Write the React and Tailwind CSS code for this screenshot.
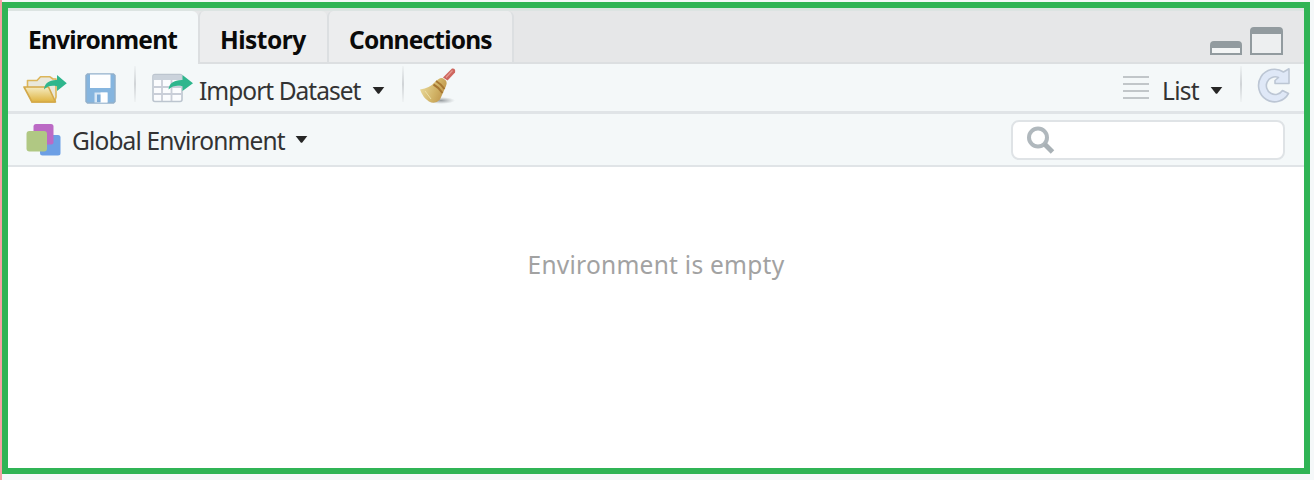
import React from "react";

function Caret({ className = "" }) {
  return (
    <svg className={`shrink-0 ${className}`} width="13" height="9" viewBox="0 0 13 9">
      <path d="M0.700 1 H12.300 L7.500 7.300 Q6.500 8.300 5.500 7.300 Z" fill="#262626" />
    </svg>
  );
}

function Arrow() {
  return (
    <path
      d="M0 14.500 C0.500 8 6 4.600 14 4.900 L14 0 L24.500 8.300 L14 16 L14 11.200 C8 10.200 4 10.800 0 14.500 Z"
      fill="#2eb68d"
    />
  );
}

function OpenFolder() {
  return (
    <svg className="shrink-0" width="46" height="30" viewBox="0 0 46 30">
      <defs>
        <linearGradient id="folder" x1="0" y1="0" x2="0" y2="1">
          <stop offset="0" stopColor="#f5ecc2" />
          <stop offset="1" stopColor="#dfb33f" />
        </linearGradient>
      </defs>
      <path d="M4.500 14 V6.500 H14 L17.500 2.800 H27 L30 5 H33 V23 L31.500 28 H9 Z" fill="#e9e8dc" stroke="#dcb65a" strokeWidth="1.600" strokeLinejoin="round" />
      <path d="M1 13 H25.500 L32.500 28 H9 Z" fill="url(#folder)" stroke="#d3a94a" strokeWidth="1.600" strokeLinejoin="round" />
      <g transform="translate(21 1) scale(0.93 1)"><Arrow /></g>
    </svg>
  );
}

function Floppy() {
  return (
    <svg className="shrink-0" width="31" height="31" viewBox="0 0 31 31">
      <path d="M2.500 1 H28.500 L30 2.500 V28.500 L28.500 30 H2.500 L1 28.500 V2.500 Z" fill="#85b5df" stroke="#93b0ca" strokeWidth="1.500" />
      <rect x="5" y="1.500" width="20.500" height="13.500" fill="#fdfeff" />
      <path d="M9.500 19.500 H22.500 V29.500 H9.500 Z" fill="#d7e7f5" />
      <path d="M15.500 19.500 H22.500 V29.500 H15.500 Z" fill="#fff" />
      <rect x="12" y="21.500" width="3.500" height="7.500" fill="#78a9d7" />
    </svg>
  );
}

function TableImport() {
  return (
    <svg className="shrink-0" width="43" height="30" viewBox="0 0 43 30">
      <rect x="1" y="1.500" width="29" height="27" rx="2" fill="#fbfcfe" stroke="#bcc5cf" strokeWidth="1.600" />
      <path d="M1.500 2 H29.500 V7 H1.500 Z" fill="#cbd3dc" />
      <path d="M1 14 H30 M1 21 H30 M10 7 V28 M19.500 7 V28" stroke="#c9ced8" strokeWidth="1.800" />
      <g transform="translate(16.500 2)"><Arrow /></g>
    </svg>
  );
}

function Broom() {
  return (
    <svg className="shrink-0" width="38" height="38" viewBox="0 0 38 38">
      <defs>
        <linearGradient id="straw" x1="0" y1="0.300" x2="1" y2="0.700">
          <stop offset="0" stopColor="#eadb9e" />
          <stop offset="0.600" stopColor="#d0b164" />
          <stop offset="1" stopColor="#bc9148" />
        </linearGradient>
        <radialGradient id="shade">
          <stop offset="0" stopColor="#8b9195" stopOpacity="0.900" />
          <stop offset="1" stopColor="#a1a6a9" stopOpacity="0" />
        </radialGradient>
      </defs>
      <ellipse cx="22" cy="33.500" rx="14" ry="3.500" fill="url(#shade)" />
      <path d="M33 1.500 Q37 1 36 5.500 L28.500 13.500 L24 10.500 Z" fill="#ce665f" />
      <path d="M33.500 3.500 L27 10.500" stroke="#e39a91" strokeWidth="1.200" />
      <path d="M19 12.500 Q23 10 25 12 Q29 14 27 19 L21 32.500 Q16 38 10 34.500 Q4 31 1 22.500 Q11 21 16 15 Z" fill="url(#straw)" />
      <path d="M17 14 Q22 17 25.500 22 M14.500 17.500 Q20 20.500 23.500 26" fill="none" stroke="#a67632" strokeWidth="2" />
      <path d="M6 24 L12 32" stroke="#eee0a5" strokeWidth="1" />
    </svg>
  );
}

function Layers() {
  return (
    <svg className="shrink-0" width="36" height="34" viewBox="0 0 36 34">
      <rect x="14" y="12" width="20.500" height="20.500" rx="2.500" fill="#6c9fe5" />
      <rect x="7.500" y="1" width="20" height="20.500" rx="2.500" fill="#bb6ac5" />
      <rect x="0.500" y="8" width="20.500" height="20.500" rx="3" fill="#b0c883" />
    </svg>
  );
}

function Refresh() {
  return (
    <svg className="shrink-0" width="34" height="36" viewBox="0 0 34 36">
      <path
        d="M26.500 5 L32 1.800 V16.500 H18 V13.500 L21.500 10.500 A8.800 8.800 0 1 0 25.500 23.500 L31.500 26.500 A16 16.300 0 1 1 26.500 5 Z"
        fill="#dfe8f7" stroke="#bcc6d4" strokeWidth="1.600" strokeLinejoin="round"
      />
    </svg>
  );
}

function Divider({ className = "" }) {
  return <div className={`h-[36px] w-[2px] shrink-0 bg-linear-to-b from-[#eff3f4] via-[#d0d4d7] to-[#eff3f4] ${className}`} />;
}

export default function App() {
  return (
    <div className="h-[480px] w-[1314px] overflow-hidden border-l-2 border-[#f6a1a5] bg-[#f5f8f9] pt-[2px] font-['Noto_Sans','Open_Sans',sans-serif] text-[24.5px] text-[#333333]">
      <div className="flex h-[472px] w-[1308px] flex-col border-[6px] border-[#30b455] bg-white">
        <div className="flex h-[56px] shrink-0 justify-between border-t-[3px] border-[#dce4e2] bg-[#e6e7e8] text-[#0a0a0a]">
          <div className="flex font-bold whitespace-nowrap">
            <div className="h-[53px] w-[190px] rounded-tr-md bg-[#f4f8f9] pt-[11px] pl-[20px] leading-[36px] tracking-[-0.78px]">
              <span>Environment</span>
            </div>
            <div className="h-[53px] w-[129px] rounded-t-md border-b-2 border-l-2 border-[#dcdfe1] bg-[#ecedee] pt-[11px] pl-[20px] leading-[36px] tracking-[-0.5px]">
              <span>History</span>
            </div>
            <div className="h-[53px] w-[187px] rounded-t-md border-x-2 border-b-2 border-[#dcdfe1] bg-[#ecedee] pt-[11px] pl-[20px] leading-[36px] tracking-[-0.8px]">
              <span>Connections</span>
            </div>
          </div>
          <div className="flex flex-1 items-end border-b-2 border-[#dcdfe1] pb-[7px]">
            <div className="mr-[8px] ml-auto h-[14px] w-[32px] rounded-t-sm border-2 border-t-[7px] border-[#929b9f] bg-[#f3f5f5]" />
            <div className="mr-[21px] h-[28px] w-[33px] rounded-t-sm border-2 border-t-[7px] border-[#929b9f] bg-[#edeff0]" />
          </div>
        </div>
        <div className="flex h-[50px] shrink-0 items-center border-b-[3px] border-[#e0e4e7] bg-[#f4f8f9] whitespace-nowrap">
          <div className="ml-[15px] flex pt-[2px]"><OpenFolder /></div>
          <div className="ml-[16px] flex pt-[2px]"><Floppy /></div>
          <Divider className="mr-[16px] ml-[18px] -mt-[8px]" />
          <TableImport />
          <div className="ml-[4px] w-[164px] pt-[6px] leading-[36px] tracking-[-0.97px]"><span>Import Dataset</span></div>
          <Caret className="mt-[6px] ml-[9px]" />
          <Divider className="mr-[15px] ml-[17px] -mt-[8px]" />
          <div className="-mt-[4px]"><Broom /></div>
          <div className="mr-[13px] ml-auto flex h-[24px] w-[26px] flex-col justify-between">
            <i className="h-[2px] bg-[#c1c6c9]" /><i className="h-[2px] bg-[#c1c6c9]" /><i className="h-[2px] bg-[#c1c6c9]" /><i className="h-[2px] bg-[#c1c6c9]" />
          </div>
          <div className="w-[40px] pt-[6px] leading-[36px] tracking-[-0.7px]"><span>List</span></div>
          <Caret className="mt-[6px] ml-[8px]" />
          <Divider className="mr-[15px] ml-[17px] -mt-[8px]" />
          <div className="-mt-[5px] mr-[13px]"><Refresh /></div>
        </div>
        <div className="flex h-[53px] shrink-0 items-center border-b-2 border-[#e0e4e7] bg-[#f4f8f9] whitespace-nowrap">
          <div className="ml-[18px] flex"><Layers /></div>
          <div className="ml-[10px] w-[215px] pt-[2px] leading-[36px] tracking-[-0.86px]"><span>Global Environment</span></div>
          <Caret className="ml-[8px]" />
          <div className="mr-[19px] ml-auto flex h-[40px] w-[274px] items-center rounded-lg border-2 border-[#dfe3e6] bg-white pl-[13px]">
            <svg width="30" height="30" viewBox="0 0 30 30">
              <circle cx="12" cy="12.500" r="9" fill="none" stroke="#b0b8bd" strokeWidth="4" />
              <path d="M18.500 19 L26.500 27" stroke="#a9b1b6" strokeWidth="5" />
            </svg>
          </div>
        </div>
        <div className="flex flex-1 justify-center pt-[80px] leading-[36px] tracking-[0.26px] text-[#a2a2a2]">
          <span>Environment is empty</span>
        </div>
      </div>
    </div>
  );
}
